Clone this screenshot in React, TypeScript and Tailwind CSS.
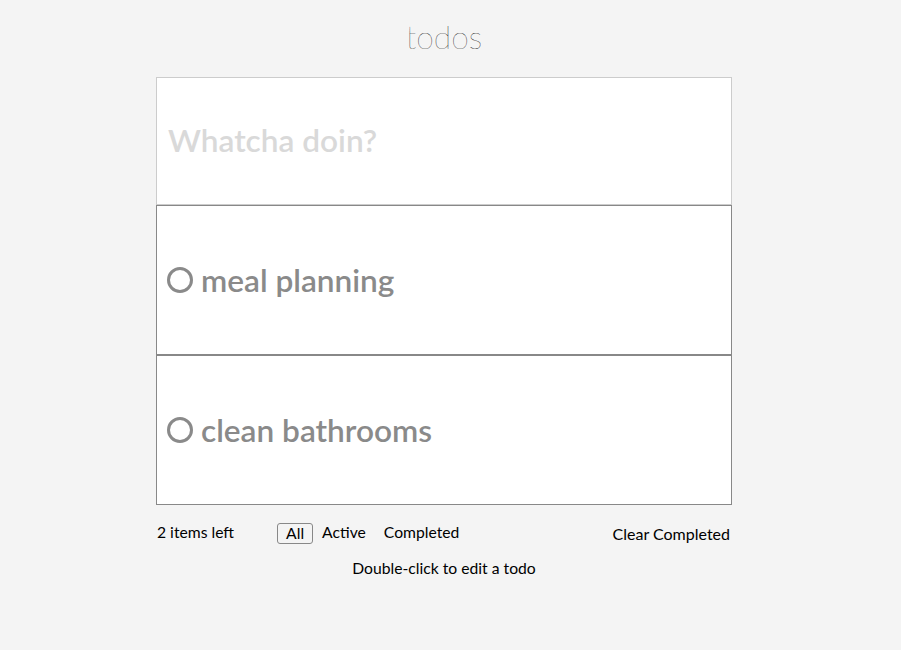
import React from "react";

const items = ["meal planning", "clean bathrooms"];

export default function App() {
  return (
    <div className="min-h-[650px] w-full bg-[#f4f4f4] font-['Lato',sans-serif] text-black">
      <div className="w-[888px] flex flex-col items-center">
        <h1 className="mt-[13px] h-[48px] text-[32px] leading-[48px] font-thin text-black">todos</h1>
        <div className="mt-[16px] w-[576px]">
          <div className="h-[128px] border border-[#cccccc] bg-white flex items-center px-[11px]">
            <span className="text-[31.6px] font-semibold text-[#d9d9d9] leading-none">Whatcha doin?</span>
          </div>
          {items.map((t) => (
            <div key={t} className="h-[150px] border border-[#888888] bg-white flex items-center px-[10px]">
              <span className="w-[26px] h-[26px] rounded-full border-[3px] border-[#8a8a8a] shrink-0" />
              <span className="ml-[8px] mt-[1px] text-[31.6px] font-semibold text-[#8a8a8a] leading-none">{t}</span>
            </div>
          ))}
          <div className="mt-[17px] flex items-center text-[15.7px] h-[22px]">
            <span className="ml-[1px]">2 items left</span>
            <div className="ml-[43px] flex items-center">
              <span className="border border-[#888] rounded-[3px] px-[8px] h-[21px] leading-[19px]">All</span>
              <span className="ml-[9px]">Active</span>
              <span className="ml-[18px]">Completed</span>
            </div>
            <span className="ml-auto mr-[2px] mt-[2px] text-[16px]">Clear Completed</span>
          </div>
        </div>
        <p className="mt-[13px] text-[15.7px]">Double-click to edit a todo</p>
      </div>
    </div>
  );
}
